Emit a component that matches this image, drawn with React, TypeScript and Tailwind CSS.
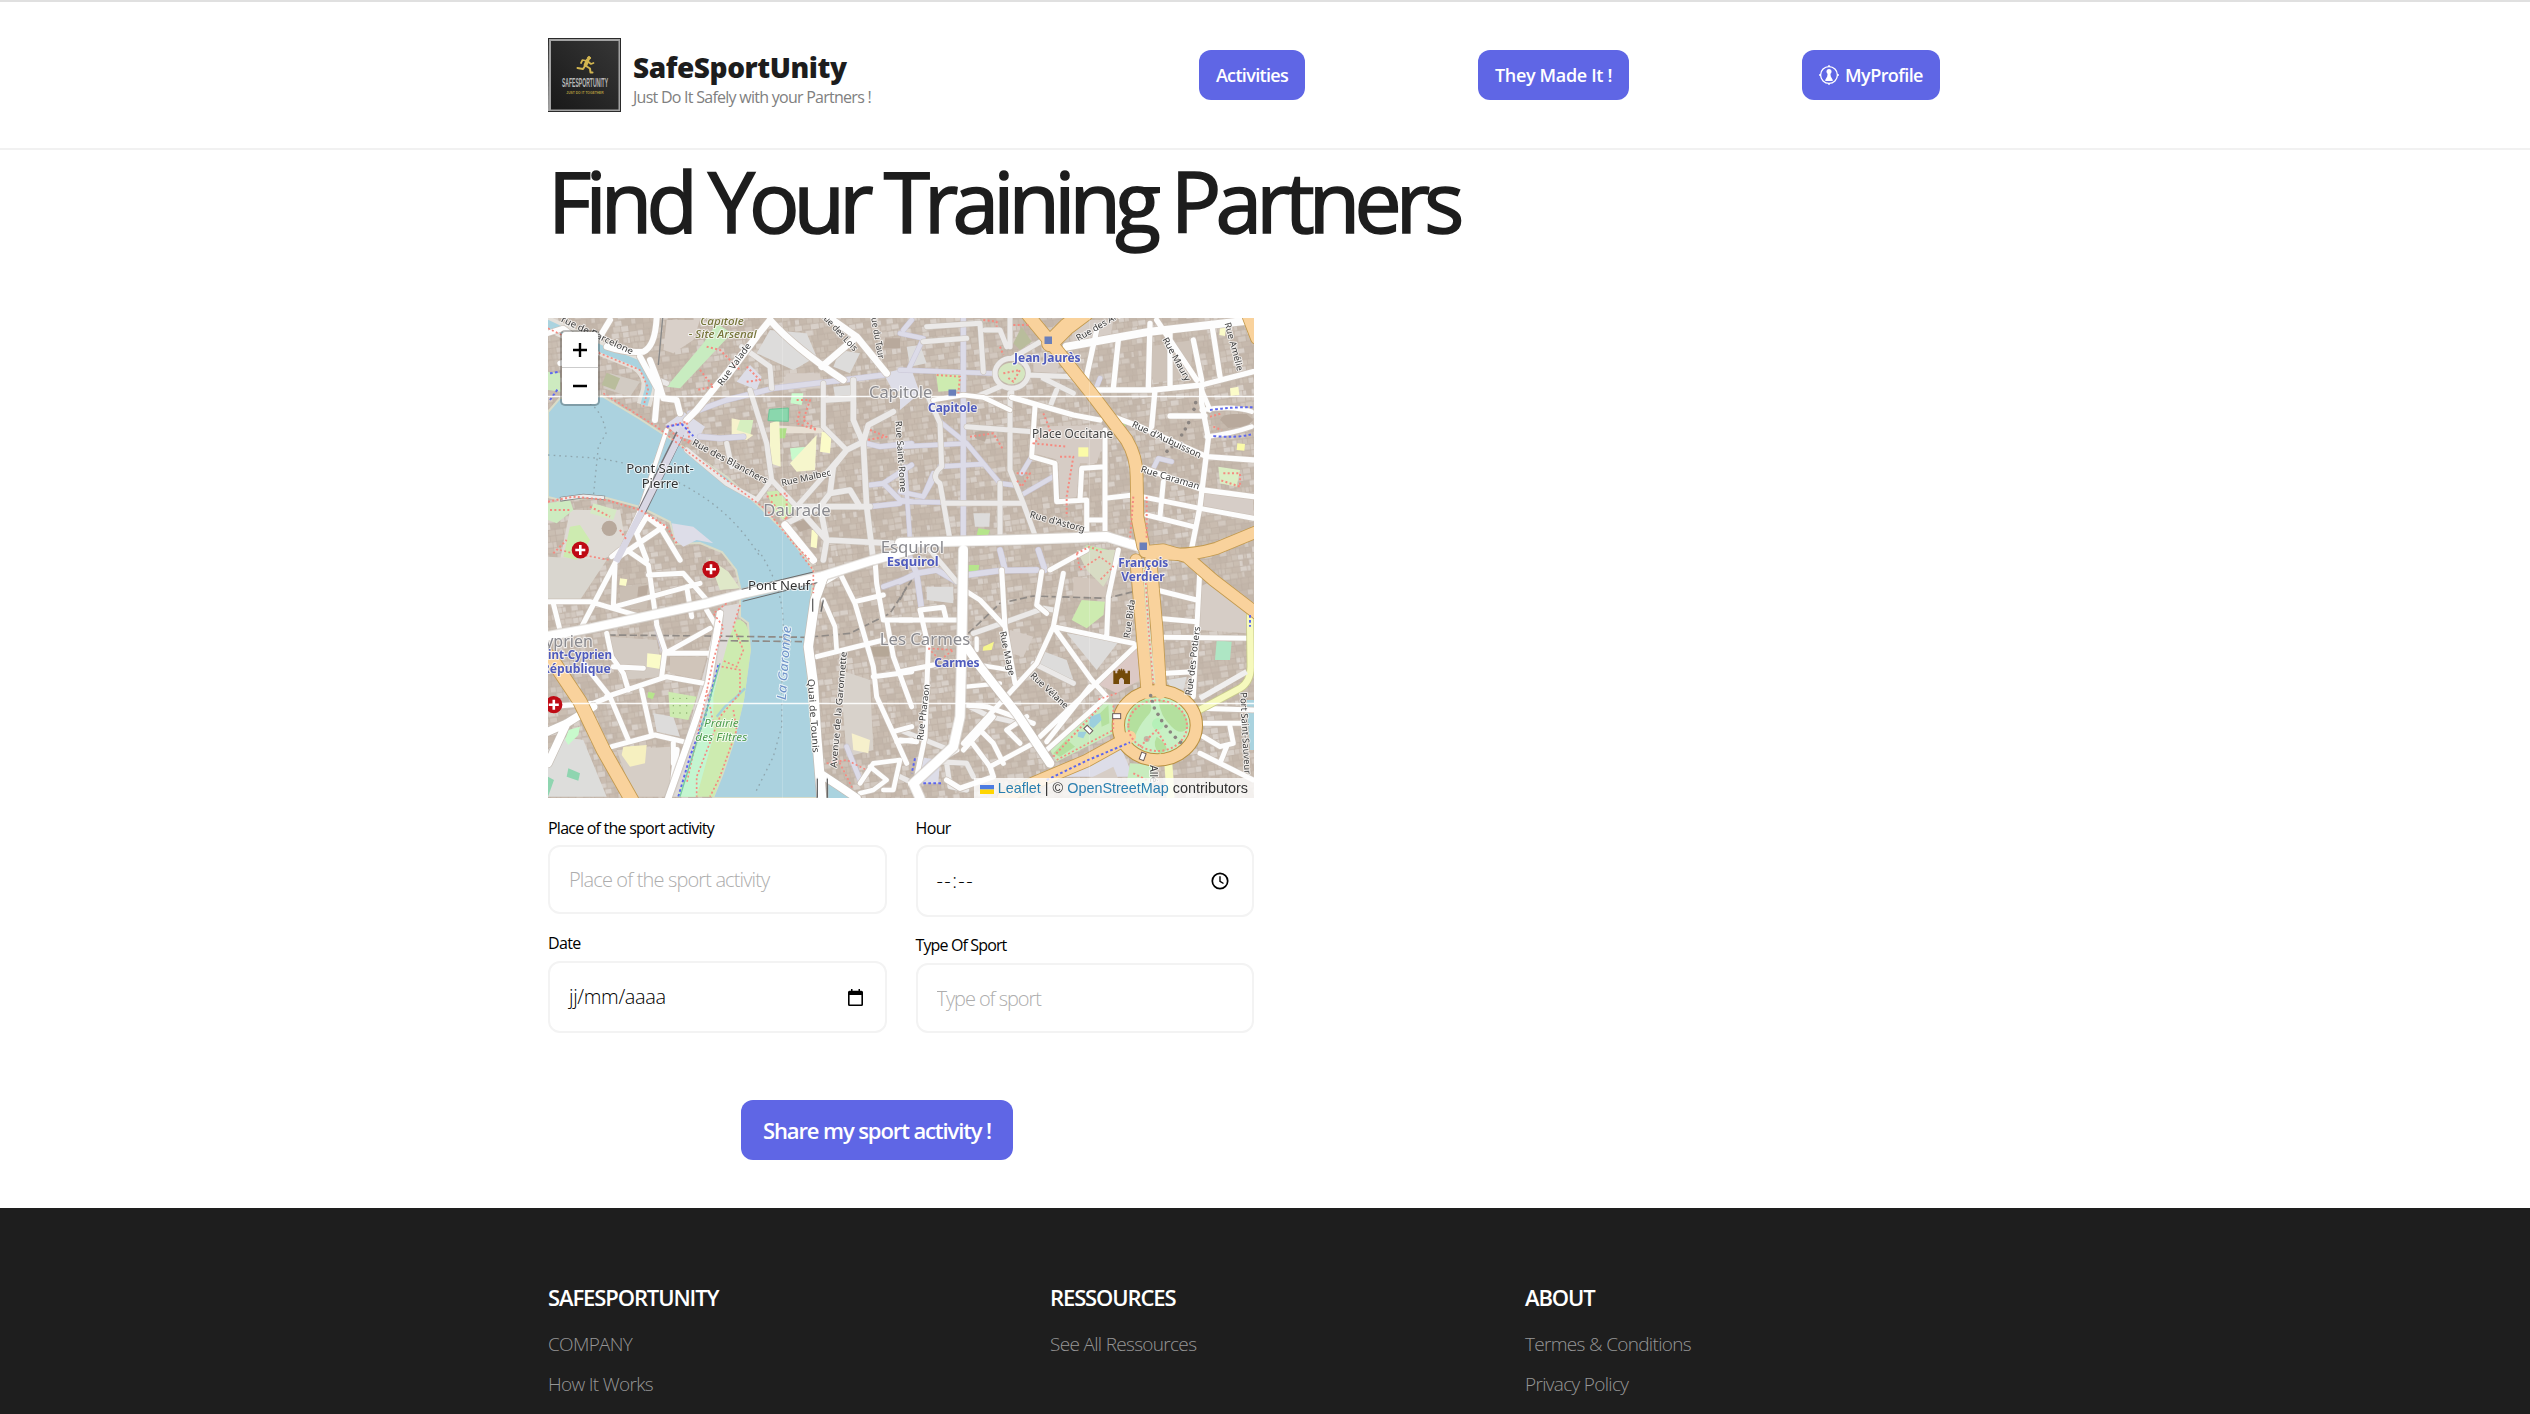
import React from "react";

type Quad = "nw" | "ne" | "sw" | "se";

const QUAD: Record<Quad, string> = {
  nw: "translate(-8 -8) scale(0.33333)",
  ne: "translate(352 -8) scale(0.33333)",
  sw: "translate(-8 232) scale(0.33333)",
  se: "translate(352 232) scale(0.33333)",
};

type Line = [Quad, string, number];
type Area = [Quad, string, string];

/* Deterministic building footprints used as the texture of the city blocks */
const buildings = (() => {
  let seed = 7;
  const rnd = () => {
    seed = (seed * 16807) % 2147483647;
    return seed / 2147483647;
  };
  const fills = ["#cabeb2", "#c6b9ad", "#cdc2b7", "#d2c8bf", "#c3b6aa", "#d8d0c9", "#c9bcb0"];
  const out: { x: number; y: number; w: number; h: number; f: string }[] = [];
  for (let y = 0; y < 120; y += 6) {
    let x = 0;
    while (x < 176) {
      const w = Math.min(3 + rnd() * 6, 176 - x);
      out.push({ x, y: y + rnd() * 0.8, w, h: 5 + rnd(), f: fills[Math.floor(rnd() * fills.length)] });
      x += w + 0.1;
    }
  }
  return out;
})();

const areas: Area[] = [
  /* squares and pedestrian areas */
  ["nw", "M375 345 L430 305 L495 350 L470 395 L420 380Z", "#dddde8"],
  ["nw", "M1030 190 L1115 170 V240 L1060 245Z", "#dddde8"],
  ["nw", "M590 215 L630 165 L665 200 L650 240Z", "#dddde8"],
  ["ne", "M0 180 L35 180 L60 250 L0 300Z", "#dddde8"],
  ["se", "M50 620 L120 630 L115 700 L60 700Z", "#dddde8"],
  ["se", "M470 680 L660 585 L700 680Z", "#dddde8"],
  /* grey courtyards */
  ["nw", "M380 30 L480 30 L460 90 L400 130 L370 120Z", "#d9d0c9"],
  ["nw", "M690 60 L800 70 L830 140 L760 180 L650 130Z", "#dddcdb"],
  ["nw", "M210 190 L300 215 L270 260 L190 235Z", "#d2cbc3"],
  ["nw", "M90 600 L240 600 L260 720 L180 750 L60 750Z", "#dedad4"],
  ["nw", "M900 120 L960 130 L930 190 L880 170Z", "#dddcdb"],
  ["nw", "M740 190 L840 190 L845 235 L720 240Z", "#d6cdc6"],
  ["nw", "M880 230 L935 225 L935 255 L885 262Z", "#dddcdb"],
  ["nw", "M520 620 L620 640 L700 750 L600 740Z", "#d0c5ba"],
  ["ne", "M20 110 L60 105 L80 160 L30 170Z", "#dddcdb"],
  ["ne", "M220 610 L270 610 L268 650 L225 650Z", "#dddcdb"],
  ["ne", "M510 160 L550 180 L540 230 L500 210Z", "#d6cdc6"],
  ["ne", "M915 535 L1060 555 V620 L910 590Z", "#d6cdc7"],
  ["ne", "M390 350 L610 345 L610 400 L590 460 L540 460 L530 560 L480 570 L475 450 L400 430Z", "#d6ccc5"],
  ["ne", "M510 30 L640 30 L630 90 L520 100Z", "#d6cdc6"],
  ["ne", "M740 110 L880 90 L870 200 L760 220Z", "#cec3b9"],
  ["ne", "M400 150 L480 155 L470 190 L400 185Z", "#d6cdc6"],
  ["se", "M520 80 L620 90 L620 140 L520 140Z", "#d2c6bc"],
  ["se", "M590 400 L710 290 L720 390 L650 430Z", "#dcc9c5"],
  ["se", "M500 250 L660 270 L590 360Z", "#dddcdb"],
  ["se", "M960 80 L1050 180 L1040 250 L900 240 L900 110Z", "#d6cdc6"],
  ["se", "M80 110 L160 110 L160 160 L80 150Z", "#dddcdb"],
  ["se", "M330 240 L400 260 L370 320 L330 310Z", "#d6cdc6"],
  ["se", "M420 300 L500 330 L520 390 L420 350Z", "#dddcdb"],
  ["se", "M800 390 L860 380 L850 420 L810 410Z", "#dddcdb"],
  ["se", "M560 690 L640 650 L660 700 L600 740Z", "#d6cdc6"],
  ["sw", "M24 20 L200 30 L120 150 L24 150Z", "#d9d6cf"],
  ["sw", "M210 260 L350 270 L370 380 L240 390Z", "#d3cbc3"],
  ["sw", "M60 560 L130 570 L200 740 L24 740 L24 600Z", "#dddddb"],
  ["sw", "M230 600 L390 590 L390 740 L280 740Z", "#d6cec6"],
  ["sw", "M545 170 L600 160 L580 250 L500 500 L420 740 L390 740Z", "#dedad8"],
  ["sw", "M900 360 L990 390 L1000 600 L920 620Z", "#d8d2cb"],
  ["sw", "M240 110 L330 100 L320 180 L240 170Z", "#cabfb4"],
  ["sw", "M390 320 L500 320 L480 390 L390 370Z", "#d0c5ba"],
  ["sw", "M340 490 L400 500 L420 560 L350 545Z", "#dddcdb"],
  /* greens */
  ["nw", "M490 100 L530 40 L575 70 L420 235 L380 230Z", "#c8ecc0"],
  ["nw", "M24 185 L60 190 L62 245 L24 240Z", "#cdebc0"],
  ["nw", "M680 545 L730 540 L770 590 L730 630 L700 600Z", "#cdebb0"],
  ["nw", "M575 330 L640 330 L630 380 L590 375Z", "#d6efc0"],
  ["nw", "M690 345 L860 355 L845 370 L700 370Z", "#e8e0d4"],
  ["nw", "M750 415 L805 410 L815 455 L775 460 L755 450Z", "#c8facc"],
  ["nw", "M700 355 L740 355 L735 385 L698 385Z", "#aedf87"],
  ["nw", "M755 250 L790 250 L785 285 L752 280Z", "#c8facc"],
  ["nw", "M90 650 L120 645 L150 690 L110 750 L70 740Z", "#cdebb0"],
  ["nw", "M24 580 L90 570 L100 600 L50 640 L24 630Z", "#cdebc0"],
  ["nw", "M160 580 L230 600 L220 630 L150 610Z", "#d5e9c4"],
  ["ne", "M108 190 L185 195 L180 240 L115 245Z", "#cdebb0"],
  ["ne", "M295 190 a40 32 0 1 0 80 0 a40 32 0 1 0 -80 0Z", "#d5e6c0"],
  ["ne", "M530 740 L560 705 L625 720 L620 750Z", "#c4e8b0"],
  ["ne", "M235 655 L270 660 L262 680 L230 675Z", "#b6e58c"],
  ["ne", "M650 335 L680 340 L672 355Z", "#b6e58c"],
  ["ne", "M955 470 L1020 480 L1010 530 L960 520Z", "#dbeec4"],
  ["se", "M530 0 L650 0 L640 60 L610 110 L560 60Z", "#d8dcc4"],
  ["se", "M205 45 L238 45 L232 75 L205 75Z", "#b6e58c"],
  ["se", "M545 150 L615 155 L610 195 L560 235 L515 210Z", "#cdebb0"],
  ["se", "M450 600 L600 455 L640 460 L640 550 L470 635Z", "#c8ecbe"],
  ["se", "M950 270 L995 275 L990 330 L945 330Z", "#aee6c4"],
  ["se", "M690 640 L760 645 L750 744 L680 700Z", "#c8ecbe"],
  ["sw", "M385 425 L470 440 L445 510 L390 500Z", "#cdebb0"],
  ["sw", "M505 25 L565 65 L600 115 L540 120Z", "#dfe8c8"],
  ["sw", "M85 540 L120 530 L115 555 L85 585 L75 570Z", "#c8facc"],
  ["sw", "M85 655 L120 670 L115 692 L80 680Z", "#8fd5b0"],
  ["sw", "M24 680 L42 690 L24 740Z", "#8fd5b0"],
  ["sw", "M325 425 L345 430 L338 448 L322 442Z", "#b6e58c"],
  /* schools */
  ["nw", "M690 340 L718 330 L722 470 L690 460Z", "#f6f6cc"],
  ["nw", "M750 460 L830 375 L825 480 L770 485Z", "#f6f6cc"],
  ["nw", "M845 365 L875 370 L870 430 L840 425Z", "#fbfbc8"],
  ["nw", "M575 325 L600 330 L590 360 L640 375 L620 390 L575 380Z", "#f6f2cc"],
  ["nw", "M815 660 L835 660 L830 715 L812 710Z", "#fbfbc8"],
  ["ne", "M535 412 H565 V440 H535Z", "#fbfba8"],
  ["ne", "M990 235 L1015 230 L1018 255 L992 258Z", "#fbfbc8"],
  ["ne", "M1012 400 L1035 402 L1033 422 L1010 420Z", "#fbfba8"],
  ["ne", "M960 50 L978 52 L975 78 L958 75Z", "#fbfbc8"],
  ["se", "M250 290 L282 275 L275 300 L248 302Z", "#f6f68c"],
  ["sw", "M322 310 L370 315 L365 358 L320 350Z", "#fbfbc8"],
  ["sw", "M240 85 L262 88 L258 108 L238 105Z", "#fbfbc8"],
  ["sw", "M250 590 L320 585 L315 640 L270 650 L245 615Z", "#f6f0c0"],
  ["sw", "M935 550 L990 570 L985 610 L940 600Z", "#f6f0cc"],
  /* landmark roofs */
  ["nw", "M185 655 a23 23 0 1 0 46 0 a23 23 0 1 0 -46 0Z", "#b8a99c"],
  ["nw", "M760 640 L820 620 L830 650 L780 665Z", "#b8a99c"],
  ["nw", "M1035 85 H1080 V115 H1030Z", "#b8a99c"],
  ["nw", "M185 225 L200 188 L240 205 L225 240Z", "#b9bd9c"],
  ["ne", "M340 100 L365 50 L395 95 L360 120Z", "#b9bd9c"],
  ["ne", "M225 365 L265 360 L255 395 L225 385Z", "#b8a99c"],
  ["ne", "M960 330 Q965 312 1000 312 L1040 312 L1060 330 L1040 350 L985 354Z", "#b8a99c"],
  ["sw", "M295 110 L325 105 L320 140 L292 140Z", "#b8a99c"],
  ["sw", "M985 290 H1048 V320 H985Z", "#b5a797"],
];

const greens: Area[] = [
  ["sw", "M590 208 Q615 208 625 240 L632 300 L612 450 L580 580 L522 740 L412 740 L480 560 L530 400 L565 270Z", "#cdebb0"],
  ["sw", "M540 340 L520 440 L520 560 L470 740 L415 740 L480 560Z", "#c4f5d0"],
];

const residential: Line[] = [
  ["nw", "M450 310 L560 270 L700 235 L910 210 L1030 195", 15],
  ["nw", "M480 380 L540 385 L610 380", 16],
  ["nw", "M990 525 L1030 520 L1115 465 M1030 520 L1080 570 L1115 575 M990 590 L1080 580", 14],
  ["nw", "M1090 60 L1115 30 M960 395 L1020 410 L1115 400", 14],
  ["ne", "M190 24 V690", 15],
  ["ne", "M0 70 L70 85 L25 180 M0 180 L280 190 M200 400 L300 520 L340 525 M200 400 L120 335 M200 400 L0 410 M120 470 L250 462 M0 545 L70 560 L110 490 M365 555 L460 500 M365 490 L395 440 M0 575 L300 580 M70 560 L100 490", 13],
  ["ne", "M15 470 L30 690", 12],
  ["ne", "M760 475 L775 445 L815 455 M590 230 L600 205", 13],
  ["se", "M20 0 L50 70 L0 95 M50 70 L65 180 M50 70 L110 60 L170 95 M200 75 L300 62 L410 60 M300 0 L315 60 M415 0 L435 60", 16],
  ["sw", "M1115 80 L1030 110 M350 230 L370 300 M920 590 L960 690", 14],
];

const lightRoads: Line[] = [
  ["nw", "M380 220 L330 200 M630 240 L680 400 L695 510 L650 570 L560 520 L440 420 M695 510 L770 590 L920 420 L850 350 L850 220", 15],
  ["nw", "M770 590 L990 590 M870 550 L930 540 L960 590 M940 210 V330 L970 400 L980 590 L1000 750 M860 270 L930 265 M840 590 L870 550 L880 470 L920 420 L970 395 L985 345 L1060 305", 17],
  ["nw", "M560 400 L575 470 M605 110 L690 170 L695 235", 15],
  ["nw", "M770 590 L860 690 L1060 700 M740 640 L840 590 L860 690 L850 750", 17],
  ["ne", "M80 50 L240 40 L250 185 M255 60 L300 60 L320 110 M70 95 L200 85 M330 24 V110 M80 250 L120 340 L125 470 Q90 500 120 520 L150 690 M200 350 L400 365 M330 250 L330 480 L370 580 L410 690 M140 580 L370 580 M300 520 V690", 15],
  ["ne", "M285 190 a50 45 0 1 0 100 0 a50 45 0 1 0 -100 0 M385 195 L520 200 M430 205 L520 250 M470 240 L450 290 M300 230 L230 260 M335 145 L430 90 M335 235 V265", 15],
  ["se", "M90 0 L170 95 M320 215 L430 175 L460 180 M400 340 L520 400 M220 250 L305 220 M0 680 L40 700", 15],
  ["se", "M210 470 L270 500 L360 520 M0 540 L150 600 M120 635 L200 640 L220 680 M140 640 L150 710 L200 720", 15],
];

const whiteRoads: Line[] = [
  ["nw", "M350 24 Q345 110 310 125 Q260 130 200 110 M330 150 L355 215 L345 330 M355 215 L370 265 L410 270 L420 310 M300 140 L355 240 M210 30 L180 80", 18],
  ["nw", "M440 330 L470 300 L690 30 M690 30 Q760 110 910 210 M845 170 L950 80 L870 24 M950 80 L1040 190 M560 200 L650 80", 20],
  ["nw", "M380 360 L300 600 L230 750", 12],
  ["nw", "M290 670 L320 620 L360 650 L420 750 M290 670 L320 750 M230 745 L370 650", 16],
  ["nw", "M24 70 L70 55 L170 130 L60 160", 16],
  ["nw", "M735 645 L820 750", 22],
  ["ne", "M500 110 L750 65 L1060 30", 24],
  ["ne", "M590 60 L555 220 M655 90 L640 235 M750 40 L745 235 M810 70 V225 M880 90 L905 210 M770 30 L890 210 M935 40 L960 200 M590 240 L760 240 L905 225 L1060 185", 16],
  ["ne", "M905 225 L905 280 L925 385 L900 590 L875 715 M765 240 L755 350 M810 318 H915", 16],
  ["ne", "M335 262 L520 315 L600 330 M640 320 L720 350 L920 440 L1060 450 M720 470 L910 540 L1060 560", 16],
  ["ne", "M405 290 L395 440 L465 460 L470 575 L560 570 M540 570 L545 475 L615 470 M615 360 V690 M615 565 L700 555 L900 595 L1060 625 M560 575 V690 M570 630 H615 M790 515 L780 620 M740 615 L880 650", 15],
  ["ne", "M100 270 L190 255 L250 262 L330 300 M905 300 Q1000 285 1055 305 M920 380 Q1000 370 1055 350 M905 240 L930 300", 14],
  ["se", "M0 210 H170 M65 200 L60 180 L130 172 L138 205 M60 180 L85 290 L75 560 L50 680 M0 570 L50 575 M0 365 L100 345", 15],
  ["se", "M200 125 L240 150 L315 230 M305 60 L315 230 L345 400 M425 65 L410 165 L440 190 M490 70 L460 230 L410 340 L190 580 M460 230 L650 270 L700 280 M460 230 L575 390 L620 440 M450 60 L560 0 M655 0 L625 140 L620 260", 15],
  ["se", "M210 340 L330 360 M200 410 L300 400 M230 265 V300", 13],
  ["se", "M710 285 L420 560 M570 410 L440 575 M615 445 L440 600", 15],
  ["se", "M770 120 L890 150 M770 205 L890 215 M790 262 L1050 265 M800 370 L880 365 M900 50 L880 440 M900 475 L1060 480 M900 520 L1030 520 M910 560 L960 590 L1000 580 L990 530 M900 610 L1060 690 M960 640 L980 590", 15],
  ["se", "M190 465 L260 470 L400 520 M240 540 L280 580 L310 640 M210 570 L270 650 L400 580 M320 540 L360 580 M280 500 L190 600 M320 540 L380 500", 15],
  ["se", "M40 700 L120 630 L170 600 M270 650 L280 680 L180 715 L140 690", 16],
  ["sw", "M230 30 L120 240 M225 45 L220 170 M215 20 L240 0 M260 0 L325 45 L340 150 L350 220 M325 75 L430 70 L500 150 M225 170 L480 100 M24 155 L150 155 L320 205 M440 110 L455 200 M40 160 L60 240", 15],
  ["sw", "M200 250 L215 320 L250 370 L265 420 M375 310 L510 235 M375 310 L505 310 M220 350 L310 355 M130 340 L210 440 L265 570 M200 440 L380 380 L490 400 M305 420 L335 555 M215 590 L345 555 L430 575 M400 580 L400 640 M24 470 L160 460 L210 440 M365 380 L375 300 L350 225 M500 180 L530 230 L510 320", 15],
  ["sw", "M900 70 L945 160 L1000 350 L1010 440 L1060 550 L1100 640 M945 155 L1030 135 M1030 210 L1010 100 L1005 30 M830 320 L1030 270 M1030 210 H1115 M1000 380 L1115 365 M1040 210 L1060 320 L1115 470 M1060 545 L1115 530 M1070 575 L1115 570", 15],
  ["sw", "M850 100 L900 70 M850 150 L885 230 L890 300 M960 700 L1000 640 L1080 630 L1060 720 L1030 720 M990 650 L1040 690 L1000 720 L960 730", 14],
  ["sw", "M410 600 L400 690", 18],
];

const mainRoads: Line[] = [
  ["ne", "M0 698 L330 690 L620 680 L735 715", 30],
  ["sw", "M24 258 L150 235 L500 160 L620 128 L840 80 L1000 30 L1115 0", 28],
  ["sw", "M850 80 L825 150 L805 290 L820 400 L830 560 L845 744", 28],
  ["sw", "M540 190 L505 400 L450 560 L385 744", 20],
  ["se", "M190 0 L185 300 L180 500 L160 590 L40 700 L60 744", 30],
  ["se", "M200 290 L240 350 L350 490 L450 640", 26],
  ["sw", "M840 670 L900 710 L950 744", 24],
  ["sw", "M24 545 L80 520 L160 470 M80 520 L24 640", 24],
];

const primary: Line[] = [
  ["ne", "M380 10 L450 95 L570 245 L680 390 Q710 440 710 500 L712 620 L730 710", 36],
  ["ne", "M450 100 L500 50 L560 5", 48],
  ["ne", "M740 725 Q850 745 950 715 L1070 665 M1045 20 L1070 85", 34],
  ["se", "M708 30 L725 230 L742 430 M752 30 L770 230 L782 430", 34],
  ["se", "M735 5 L790 0 L860 20 L940 90 L1070 190", 34],
  ["se", "M690 560 L560 632 L400 700 L310 744", 36],
  ["sw", "M30 320 L120 455 L190 600 L275 750", 40],
];

const footways: Line[] = [
  ["nw", "M24 55 L180 130 L300 180 L325 235 L310 290", 5],
  ["nw", "M190 250 L350 350 L450 430 L600 540 L680 600 L760 700 L810 750", 5],
  ["nw", "M380 350 L440 335 L450 400 L400 370 L380 350 M480 180 L520 230 L470 240 M620 170 L660 210 L620 215 M500 110 L540 120 L600 180", 6],
  ["nw", "M770 270 L810 270 L790 330 L830 360 L770 340 L780 300 M990 360 L1040 380 L980 390 M680 560 L740 550 L740 630 L690 570", 6],
  ["nw", "M24 575 L100 560 L200 570 L300 600 L380 650 L410 700 M150 590 L210 620 M240 660 L260 690 M30 600 L90 600 M40 730 L80 690", 6],
  ["ne", "M250 30 L290 35 L290 50 M110 195 L180 200 L175 250 M310 190 L360 180 L340 215 L320 200 M430 310 L450 360 L400 400 L500 410 M480 440 L520 440 L500 560 L500 620 M210 380 L280 370 L310 420 M350 490 L390 490 L365 530 L350 510 M700 560 L690 690 M740 560 L740 690 M300 110 L310 135 M340 45 H390", 6],
  ["ne", "M970 490 L1020 490 L1020 530 L960 510 M930 320 L965 310 M940 350 L965 360 M530 730 L570 710 L610 730", 6],
  ["se", "M530 10 L540 60 L600 20 L640 50 L600 90 M85 295 L160 300 L120 330 L85 295 M650 430 L590 450 M470 630 L640 540 L640 460", 5],
  ["se", "M735 60 L745 230 L760 400", 5],
  ["se", "M685 527 a88 76 0 1 0 176 0 a88 76 0 1 0 -176 0", 6],
  ["se", "M720 590 L770 540 L800 590 M700 670 L740 690 M460 620 L600 470", 6],
  ["sw", "M560 160 L520 190 L550 230 L520 330 L480 520 L440 700 M600 165 L580 230 L610 300 L590 350 L545 330 M545 350 L600 360 L600 430 L540 500 L470 680 L470 740 M580 480 L590 540 L540 680 L510 740 M500 420 L520 520", 5],
  ["sw", "M780 10 L820 60 L820 130 M880 620 L900 640 L940 720 M860 640 L920 630 L980 660 M60 0 L100 10 L210 30", 5],
];

const Roads = ({ list, color, grow = 0, dash }: { list: Line[]; color: string; grow?: number; dash?: string }) => (
  <g fill="none" stroke={color} strokeLinejoin="round" strokeLinecap={dash ? "butt" : "round"}>
    {list.map(([q, d, w], i) => (
      <path key={i} transform={QUAD[q]} d={d} strokeWidth={w + grow} strokeDasharray={dash} />
    ))}
  </g>
);

const Areas = ({ list }: { list: Area[] }) => (
  <g>
    {list.map(([q, d, f], i) => (
      <path key={i} transform={QUAD[q]} d={d} fill={f} />
    ))}
  </g>
);

type LabelSpec = {
  q: Quad;
  x: number;
  y: number;
  w: number;
  t: string;
  s: number;
  c: string;
  a?: number;
  b?: number;
  i?: boolean;
};

const STREET = "#3d3d3d";
const DISTRICT = "#8a8a8f";
const METRO = "#4f5bbd";

/* x / y is the centre of the label's baseline, a its rotation */
const labels: LabelSpec[] = [
  { q: "nw", x: 546, y: 44, w: 130, t: "Capitole", s: 31, c: "#76753a", i: true, b: 500 },
  { q: "nw", x: 548, y: 84, w: 204, t: "- Site Arsenal", s: 31, c: "#76753a", i: true, b: 500 },
  { q: "nw", x: 168, y: 84, w: 235, t: "rue de Barcelone", s: 27, c: STREET, a: 25 },
  { q: "nw", x: 590, y: 168, w: 150, t: "Rue Valade", s: 27, c: STREET, a: -54 },
  { q: "nw", x: 890, y: 70, w: 150, t: "Rue des Lois", s: 27, c: STREET, a: 47 },
  { q: "nw", x: 1003, y: 78, w: 140, t: "Rue du Taur", s: 27, c: STREET, a: 80 },
  { q: "nw", x: 566, y: 463, w: 252, t: "Rue des Blanchers", s: 28, c: STREET, a: 28 },
  { q: "nw", x: 800, y: 512, w: 152, t: "Rue Malbec", s: 27, c: STREET, a: -12 },
  { q: "nw", x: 1074, y: 440, w: 215, t: "Rue Saint-Rome", s: 27, c: STREET, a: 86 },
  { q: "nw", x: 360, y: 488, w: 202, t: "Pont Saint-", s: 37, c: "#333333" },
  { q: "nw", x: 360, y: 535, w: 110, t: "Pierre", s: 37, c: "#333333" },
  { q: "nw", x: 771, y: 617, w: 202, t: "Daurade", s: 48, c: DISTRICT },
  { q: "ne", x: 2, y: 263, w: 190, t: "Capitole", s: 46, c: DISTRICT },
  { q: "ne", x: 442, y: 157, w: 200, t: "Jean Jaurès", s: 35, c: METRO, b: 700 },
  { q: "ne", x: 158, y: 307, w: 148, t: "Capitole", s: 35, c: METRO, b: 700 },
  { q: "ne", x: 518, y: 385, w: 244, t: "Place Occitane", s: 36, c: "#444444" },
  { q: "ne", x: 604, y: 54, w: 160, t: "Rue des Arts", s: 27, c: STREET, a: -30 },
  { q: "ne", x: 822, y: 152, w: 145, t: "Rue Maury", s: 27, c: STREET, a: 61 },
  { q: "ne", x: 993, y: 112, w: 150, t: "Rue Amélie", s: 27, c: STREET, a: 75 },
  { q: "ne", x: 796, y: 397, w: 226, t: "Rue d'Aubuisson", s: 28, c: STREET, a: 25 },
  { q: "ne", x: 808, y: 512, w: 182, t: "Rue Caraman", s: 28, c: STREET, a: 17 },
  { q: "ne", x: 470, y: 644, w: 170, t: "Rue d'Astorg", s: 28, c: STREET, a: 15 },
  { q: "ne", x: 37, y: 730, w: 190, t: "Esquirol", s: 48, c: DISTRICT },
  { q: "se", x: 38, y: 48, w: 156, t: "Esquirol", s: 36, c: METRO, b: 700 },
  { q: "se", x: 730, y: 50, w: 150, t: "François", s: 36, c: METRO, b: 700 },
  { q: "se", x: 729, y: 93, w: 130, t: "Verdier", s: 36, c: METRO, b: 700 },
  { q: "se", x: 75, y: 284, w: 272, t: "Les Carmes", s: 48, c: DISTRICT },
  { q: "se", x: 171, y: 350, w: 136, t: "Carmes", s: 36, c: METRO, b: 700 },
  { q: "se", x: 313, y: 312, w: 135, t: "Rue Mage", s: 27, c: STREET, a: 78 },
  { q: "se", x: 442, y: 428, w: 145, t: "Rue Vélane", s: 27, c: STREET, a: 43 },
  { q: "se", x: 79, y: 488, w: 170, t: "Rue Pharaon", s: 27, c: STREET, a: -83 },
  { q: "se", x: 697, y: 208, w: 116, t: "Rue Bida", s: 27, c: STREET, a: -82 },
  { q: "se", x: 888, y: 334, w: 208, t: "Rue des Potiers", s: 28, c: STREET, a: -83 },
  { q: "se", x: 1027, y: 550, w: 245, t: "Port Saint-Sauveur", s: 28, c: STREET, a: 87 },
  { q: "se", x: 750, y: 672, w: 52, t: "Allé", s: 30, c: STREET, a: 90 },
  { q: "sw", x: 717, y: 120, w: 186, t: "Pont Neuf", s: 37, c: "#333333" },
  { q: "sw", x: 72, y: 292, w: 174, t: "Cyprien", s: 46, c: DISTRICT },
  { q: "sw", x: 100, y: 328, w: 232, t: "Saint-Cyprien", s: 36, c: METRO, b: 700 },
  { q: "sw", x: 98, y: 370, w: 228, t: "- République", s: 36, c: METRO, b: 700 },
  { q: "sw", x: 745, y: 340, w: 222, t: "La Garonne", s: 38, c: "#6f93c9", a: -86, i: true },
  { q: "sw", x: 811, y: 498, w: 222, t: "Quai de Tounis", s: 28, c: STREET, a: 86 },
  { q: "sw", x: 905, y: 480, w: 350, t: "Avenue de la Garonnette", s: 27, c: STREET, a: -85 },
  { q: "sw", x: 544, y: 530, w: 104, t: "Prairie", s: 34, c: "#4f9d4f", i: true },
  { q: "sw", x: 544, y: 574, w: 156, t: "des Filtres", s: 34, c: "#4f9d4f", i: true },
];

const Label = ({ q, x, y, w, t, s, c, a = 0, b = 400, i }: LabelSpec) => (
  <g transform={QUAD[q]}>
    <text
      transform={`translate(${x} ${y}) rotate(${a})`}
      textAnchor="middle"
      textLength={w}
      lengthAdjust="spacingAndGlyphs"
      fontSize={s}
      fontWeight={b}
      fontStyle={i ? "italic" : "normal"}
      fill={c}
      stroke="#ffffff"
      strokeOpacity={0.7}
      strokeWidth={6}
      strokeLinejoin="round"
      paintOrder="stroke"
    >
      {t}
    </text>
  </g>
);

const Hospital = ({ x, y }: { x: number; y: number }) => (
  <g transform={`translate(${x} ${y})`}>
    <circle r="8.6" fill="#bf0a14" />
    <path d="M-5 0H5M0 -5V5" stroke="#fff" strokeWidth="2.6" />
  </g>
);

const CityMap = () => (
  <svg viewBox="0 0 706 480" className="block h-[480px] w-[706px] font-['Noto_Sans',sans-serif]">
    <defs>
      <filter id="soft" x="0" y="0" width="1" height="1">
        <feGaussianBlur stdDeviation="0.55" />
      </filter>
      <pattern id="blocks" width="176" height="120" patternUnits="userSpaceOnUse" patternTransform="rotate(-8)">
        <rect width="176" height="120" fill="#c8bcb1" />
        {buildings.map((r, i) => (
          <rect key={i} x={r.x} y={r.y} width={r.w} height={r.h} fill={r.f} stroke="#bcaea2" strokeWidth="0.4" />
        ))}
      </pattern>
    </defs>
    <g filter="url(#soft)">
      <rect width="706" height="480" fill="url(#blocks)" />
      <Areas list={areas} />

      {/* Canal de Brienne and the Garonne */}
      <path transform={QUAD.nw} d="M10 35 L180 115 L290 160 Q335 190 325 240 L312 285" fill="none" stroke="#e4e0da" strokeWidth="44" />
      <path transform={QUAD.nw} d="M10 35 L180 115 L290 160 Q335 190 325 240 L312 285" fill="none" stroke="#aad3df" strokeWidth="22" />
      <path
        d="M0 94 L12 80 L54 78 L92 101 L135 129 L179 159 L212 189 L235 212 L259 242 L266 254 L264 272 L259 325 L260 365 L265 432 L271 452 L270 480 H165 L175 455 L185 425 L195 382 L202 332 L200 305 L192 299 L192 269 L188 252 L174 234 L152 225 L128 226 L122 204 L92 189 L55 179 L12 182 L0 179Z"
        fill="#abd2df"
        stroke="#d9dcc8"
        strokeWidth="2"
      />
      <Areas list={greens} />
      <path transform={QUAD.sw} d="M530 500 L555 470 L590 440 L615 415" fill="none" stroke="#a3d0d8" strokeWidth="7" />
      <path transform={QUAD.sw} d="M865 700 L930 744 H865Z" fill="#aad3df" />
      <path transform={QUAD.se} d="M1040 450 H1065 V600 L1050 600Z" fill="#aad3df" />
      <path transform={QUAD.nw} d="M395 640 L460 650 L520 700 L470 690 L430 710 L405 690Z" fill="#dddde8" />
      <g fill="none" stroke="#8fa6ae" strokeWidth="4" strokeDasharray="5 12">
        <path transform={QUAD.nw} d="M150 280 Q190 310 198 370 L175 410 L160 560 M24 435 L180 445 L280 465 M400 510 Q570 590 660 740" />
        <path transform={QUAD.sw} d="M655 0 Q740 130 728 250 L725 530 L700 620 L645 730" />
      </g>

      {/* Railway tunnels */}
      <g fill="none" stroke="#8f8a86" strokeWidth="5" strokeDasharray="22 10">
        <path transform={QUAD.sw} d="M205 255 L500 258 L800 262 L930 250 L1050 190 L1115 90 M540 272 L800 275" />
        <path transform={QUAD.se} d="M205 250 L300 160 L400 138 L620 145 L700 125 M0 150 L20 110" />
      </g>

      <Roads list={residential} color="#c9c6d6" grow={3} />
      <Roads list={residential} color="#dcdbe8" />
      <Roads list={lightRoads} color="#c9c2bb" grow={3} />
      <Roads list={lightRoads} color="#ebe9e8" />
      <Roads list={whiteRoads} color="#cbc1b8" grow={4} />
      <Roads list={whiteRoads} color="#fdfdfd" />
      <Roads list={mainRoads} color="#c4bcb4" grow={4} />
      <Roads list={mainRoads} color="#ffffff" />

      {/* Bridges */}
      <g fill="none">
        <path transform={QUAD.nw} d="M420 370 L305 605" stroke="#77757a" strokeWidth="26" />
        <path transform={QUAD.nw} d="M430 355 L300 615 L228 755" stroke="#d9d7e4" strokeWidth="20" />
        <path transform={QUAD.sw} d="M608 154 L832 98 M605 118 L820 66" stroke="#6a6a6a" strokeWidth="3" />
        <path transform={QUAD.nw} d="M60 568 L130 558 L195 564" stroke="#888" strokeWidth="14" />
        <path transform={QUAD.nw} d="M62 567 L130 558 L193 563" stroke="#eee" strokeWidth="9" />
        <path transform={QUAD.nw} d="M368 24 L355 165" stroke="#888" strokeWidth="4" />
        <path transform={QUAD.sw} d="M818 145 V185 M850 150 L843 185 M832 685 V744 M862 685 V744" stroke="#666" strokeWidth="4" />
      </g>

      <path transform={QUAD.se} d="M880 490 L1020 415 Q1052 395 1052 350 L1050 190" fill="none" stroke="#c9cc8c" strokeWidth="24" />
      <path transform={QUAD.se} d="M880 490 L1020 415 Q1052 395 1052 350 L1050 190" fill="none" stroke="#f6f9bd" strokeWidth="19" />
      <path transform={QUAD.se} d="M805 640 L812 744" stroke="#f6f9bd" strokeWidth="24" />
      <path transform={QUAD.se} d="M900 445 L1040 365" stroke="#f0efef" strokeWidth="16" />

      <Roads list={primary} color="#c39a4f" grow={5} />
      <g transform={QUAD.se}>
        <ellipse cx="772" cy="526" rx="117" ry="104" fill="#c8f0c4" stroke="#b9903f" strokeWidth="40" />
        <ellipse cx="772" cy="526" rx="117" ry="104" fill="none" stroke="#f9d29c" strokeWidth="34" />
        <path d="M682 540 Q680 460 745 448 Q765 480 740 500 Q715 530 705 560Z M775 448 Q860 465 865 530 Q845 560 815 530 Q780 500 775 448Z M770 560 Q800 580 800 600 L780 612 Q755 590 770 560Z" fill="#b4e09e" />
        <circle cx="774" cy="522" r="18" fill="#b5f0b8" />
        <circle cx="740" cy="567" r="9" fill="#c2b5a5" />
        <path d="M460 610 L500 568 L525 590 L480 620Z M600 490 L625 465 L628 520 L605 530Z" fill="#b4e09e" />
        <path d="M570 500 L600 490 L605 510 L580 535 L565 525Z M535 545 L560 545 L550 565 L533 560Z" fill="#9ccfdd" />
      </g>
      <Roads list={primary} color="#f9d29c" />
      <path transform={QUAD.se} d="M733 55 L745 230 L762 400" fill="none" stroke="#dfe3c6" strokeWidth="9" />

      <Roads list={footways} color="#f58a80" dash="6 7" />
      <g fill="none" stroke="#5c66ee" strokeWidth="6" strokeDasharray="8 7">
        <path transform={QUAD.sw} d="M535 345 L495 500 L450 620 L415 740" />
        <path transform={QUAD.nw} d="M380 350 L425 342 L460 378 M30 190 L60 185 M30 270 L55 235" />
        <path transform={QUAD.ne} d="M930 300 Q1000 290 1058 292 M940 378 Q1010 385 1058 372" />
        <path transform={QUAD.se} d="M440 690 L560 632 L690 577 M45 625 L35 670 M70 700 H130 M1050 195 V230" />
      </g>
      <path transform={QUAD.sw} d="M540 340 L500 480 L420 740" fill="none" stroke="#79c9a4" strokeWidth="4" />
      <g fill="#8a8480">
        {[[887, 278], [882, 298], [866, 338], [856, 357], [845, 375], [816, 410], [801, 424]].map(([x, y], i) => (
          <circle key={i} cx={x / 3 + 352} cy={y / 3 - 8} r="1.8" />
        ))}
        {[[752, 437], [757, 455], [763, 474], [774, 493], [785, 512], [798, 529], [811, 546], [826, 562], [842, 577]].map(([x, y], i) => (
          <circle key={i} cx={x / 3 + 352} cy={y / 3 + 232} r="1.8" />
        ))}
      </g>
      <g fill="#84a866" transform={QUAD.sw}>
        {[400, 420, 440].map((x) => [445, 467, 489].map((y) => <circle key={`${x}-${y}`} cx={x} cy={y} r="2" />))}
      </g>
      <path transform={QUAD.nw} d="M688 298 L745 294 L745 334 L684 332Z" fill="#8ad7ad" stroke="#6cc396" strokeWidth="3" />
      <g fill="#fff" stroke="#6b5a5a" strokeWidth="3" transform={QUAD.se}>
        <rect x="638" y="491" width="24" height="15" />
        <rect x="553" y="532" width="24" height="14" transform="rotate(45 565 539)" />
        <rect x="721" y="608" width="14" height="22" transform="rotate(20 728 619)" />
      </g>
    </g>

    {/* Metro stations */}
    <g fill="#6a7fba">
      <rect x="496.500" y="18.500" width="7.500" height="7.500" />
      <rect x="400.500" y="71.500" width="7.500" height="7.500" />
      <rect x="591.500" y="224.500" width="7.500" height="7.500" />
    </g>

    {/* Castle marker */}
    <path
      transform={QUAD.se}
      d="M640 402 V362 H646 V370 H652 V362 H655 V358 H661 V364 L664 354 L668 364 V358 H673 V362 H676 V370 H683 V362 H690 V402 H672 V390 Q664 376 657 390 V402Z"
      fill="#734a08"
    />

    {/* Tile seams */}
    <path d="M0 78.500H706M0 385.500H706" stroke="#fff" strokeWidth="1.700" opacity="0.9" />
    <path d="M234.500 0V480M541.500 0V480" stroke="#fff" strokeWidth="0.600" opacity="0.3" />

    {labels.map((l, i) => (
      <Label key={i} {...l} />
    ))}

    <Hospital x={32.3} y={232} />
    <Hospital x={163} y={251.300} />
    <Hospital x={5.800} y={386.700} />
  </svg>
);

const Logo = () => (
  <svg viewBox="0 0 73 74" className="block h-[74px] w-[73px] shrink-0">
    <defs>
      <linearGradient id="logoShade" x1="0" y1="1" x2="1" y2="0">
        <stop offset="0" stopColor="#191919" />
        <stop offset="1" stopColor="#363636" />
      </linearGradient>
    </defs>
    <rect width="73" height="74" fill="#2a2a2a" />
    <path d="M1 1H72V73H0Z" fill="#a3a3a3" />
    <rect x="3" y="3" width="67.500" height="68.500" fill="url(#logoShade)" />
    <g fill="none" stroke="#d3b650" strokeLinecap="round" strokeLinejoin="round">
      <circle cx="41" cy="20" r="1.500" fill="#d3b650" />
      <path d="M39.500 22.500L37.500 27" strokeWidth="3.800" />
      <path d="M39 23L34.500 22L33 25M40.500 24L43 26L45.500 25" strokeWidth="1.700" />
      <path d="M38 28L42 30.500L42.500 34.500H44.500M37 28L35 31L29.500 30" strokeWidth="2" />
    </g>
    <text transform="translate(37 48.500) scale(0.39 1)" textAnchor="middle" fontSize="13" fontWeight="700" fill="#b8b8b8" className="font-['Liberation_Sans',sans-serif]">
      SAFESPORTUNITY
    </text>
    <text transform="translate(37 56.300) scale(0.83 1)" textAnchor="middle" fontSize="4" fontWeight="700" fill="#b09a3e" className="font-['Liberation_Sans',sans-serif]">
      JUST DO IT TOGETHER
    </text>
  </svg>
);

const ProfileIcon = () => (
  <svg viewBox="0 0 20 20" className="block size-[20px]" fill="none">
    <circle cx="10" cy="10" r="8.400" stroke="#fff" strokeWidth="1.300" />
    <path d="M10 0v2M10 18v2M0 10h2M18 10h2" stroke="#fff" strokeWidth="1.300" />
    <circle cx="10" cy="6.500" r="2.500" fill="#fff" />
    <path d="M8.700 8h2.600l.5 3.500 1.900 3.200v1.300H6.300v-1.300l1.900-3.200z" fill="#fff" />
  </svg>
);

const NavButton = ({ className, children }: { className: string; children: React.ReactNode }) => (
  <button
    className={`flex h-[50px] items-center justify-center rounded-xl bg-[#5f66e5] text-[18px] font-semibold whitespace-nowrap text-white ${className}`}
  >
    {children}
  </button>
);

const fieldBox = "w-full rounded-xl border-2 border-[#f3f3f3] bg-white text-[20px] font-light";

const FieldLabel = ({ className, children }: { className: string; children: React.ReactNode }) => (
  <label className={`block h-[24px] text-[16px] leading-[24px] whitespace-nowrap text-black ${className}`}>{children}</label>
);

const FooterColumn = ({ title, links }: { title: string; links: string[] }) => (
  <div>
    <h2 className="h-[30px] text-[22px] leading-[30px] font-semibold tracking-[-0.050em] text-white">{title}</h2>
    <ul className="mt-[12px]">
      {links.map((l) => (
        <li key={l} className="h-[40px] text-[19px] leading-[40px] font-light tracking-[-0.036em] text-[#969696]">
          {l}
        </li>
      ))}
    </ul>
  </div>
);

export default function App() {
  return (
    <div className="flex h-[1414px] w-[2530px] flex-col overflow-hidden bg-white font-['Open_Sans','Noto_Sans',sans-serif] text-[#1d1d1d]">
      <header className="h-[150px] border-y-2 border-t-[#e0e0e0] border-b-[#f1f1f1]">
        <div className="mx-auto flex w-[1434px] items-start pt-[36px]">
          <Logo />
          <div className="mt-[11px] ml-[12px] w-[566px] whitespace-nowrap">
            <div className="text-[28px] leading-[36px] font-extrabold tracking-[-0.015em]">SafeSportUnity</div>
            <div className="mt-px text-[16px] leading-[22px] tracking-[-0.046em] text-[#808080]">Just Do It Safely with your Partners !</div>
          </div>
          <nav className="mt-[12px] flex">
            <NavButton className="w-[106px] tracking-[-0.037em]">Activities</NavButton>
            <NavButton className="ml-[173px] w-[151px] tracking-[-0.019em]">They Made It !</NavButton>
            <NavButton className="ml-[173px] w-[138px] gap-[6px] tracking-[-0.032em]">
              <ProfileIcon />
              MyProfile
            </NavButton>
          </nav>
        </div>
      </header>

      <main className="mx-auto h-[1058px] w-[1434px] shrink-0">
        <h1 className="h-[101px] pt-px text-[84px] leading-[100px] font-normal tracking-[-0.070em] whitespace-nowrap [-webkit-text-stroke:1.6px_#1d1d1d]">
          Find Your Training Partners
        </h1>

        <section className="mt-[67px] w-[706px]">
          <div className="relative h-[480px] overflow-hidden bg-[#ddd]">
            <CityMap />
            <div className="absolute top-[12px] left-[12px] w-[40px] overflow-hidden rounded-[5px] border-2 border-black/25 bg-white bg-clip-padding text-black">
              <button className="flex h-[36px] w-full items-center justify-center border-b border-[#ccc]" aria-label="Zoom in">
                <svg viewBox="0 0 14 14" className="size-[14px]" stroke="currentColor" strokeWidth="2.400">
                  <path d="M0 7H14M7 0V14" />
                </svg>
              </button>
              <button className="flex h-[36px] w-full items-center justify-center" aria-label="Zoom out">
                <svg viewBox="0 0 14 14" className="size-[14px]" stroke="currentColor" strokeWidth="2.400">
                  <path d="M0 7H14" />
                </svg>
              </button>
            </div>
            <div className="absolute right-0 bottom-0 flex h-[20px] items-center bg-white/80 px-[6px] pt-[2px] font-['Liberation_Sans',sans-serif] text-[14.4px] whitespace-pre text-[#333]">
              <svg viewBox="0 0 14 9" className="mr-[4px] h-[9px] w-[14px]">
                <path fill="#4c7be1" d="M0 0h14v4.500H0z" />
                <path fill="#ffd500" d="M0 4.500h14V9H0z" />
              </svg>
              <span className="text-[#2a7fb0]">Leaflet</span>
              <span> | © </span>
              <span className="text-[#2a7fb0]">OpenStreetMap</span>
              <span> contributors</span>
            </div>
          </div>

          <form className="grid grid-cols-2 gap-x-[29px] pt-[18px]">
            <div>
              <FieldLabel className="tracking-[-0.048em]">Place of the sport activity</FieldLabel>
              <input
                className={`${fieldBox} mt-[5px] block h-[69px] px-[19px] tracking-[-0.043em] placeholder:text-[#adadad]`}
                placeholder="Place of the sport activity"
              />
              <FieldLabel className="mt-[17px] tracking-[-0.040em]">Date</FieldLabel>
              <div className={`${fieldBox} mt-[6px] flex h-[72px] items-center justify-between pr-[22px] pl-[19px]`}>
                <span className="tracking-[-0.018em] text-black">jj/mm/aaaa</span>
                <svg viewBox="0 0 15 17" className="h-[17px] w-[15px]">
                  <path fill="#000" fillRule="evenodd" d="M3 0h1.500v1.700h6V0H12v1.700h1.500Q15 1.700 15 3.200v12.300Q15 17 13.500 17h-12Q0 17 0 15.500V3.200Q0 1.700 1.500 1.700H3zM1.600 6v9.400h11.800V6z" />
                </svg>
              </div>
            </div>
            <div>
              <FieldLabel className="tracking-[-0.040em]">Hour</FieldLabel>
              <div className={`${fieldBox} mt-[5px] flex h-[72px] items-center justify-between pr-[23px] pl-[19px]`}>
                <span className="tracking-[0.070em] text-black">--:--</span>
                <svg viewBox="0 0 18 18" className="size-[18px]" fill="none" stroke="#000">
                  <circle cx="9" cy="9" r="7.700" strokeWidth="1.700" />
                  <path d="M9 4.300V9.300L12.500 11.500" strokeWidth="1.400" />
                </svg>
              </div>
              <FieldLabel className="mt-[16px] tracking-[-0.054em]">Type Of Sport</FieldLabel>
              <input
                className={`${fieldBox} mt-[6px] block h-[70px] px-[19px] tracking-[-0.053em] placeholder:text-[#adadad]`}
                placeholder="Type of sport"
              />
            </div>
          </form>

          <button className="mt-[67px] ml-[193px] flex h-[60px] w-[272px] items-center justify-center rounded-xl bg-[#5f66e5] text-[22px] font-semibold tracking-[-0.050em] whitespace-nowrap text-white">
            Share my sport activity !
          </button>
        </section>
      </main>

      <footer className="h-[206px] shrink-0 bg-[#1e1e1e] pt-[74px]">
        <div className="mx-auto grid w-[1434px] grid-cols-[502px_475px_1fr]">
          <FooterColumn title="SAFESPORTUNITY" links={["COMPANY", "How It Works"]} />
          <FooterColumn title="RESSOURCES" links={["See All Ressources"]} />
          <FooterColumn title="ABOUT" links={["Termes & Conditions", "Privacy Policy"]} />
        </div>
      </footer>
    </div>
  );
}
